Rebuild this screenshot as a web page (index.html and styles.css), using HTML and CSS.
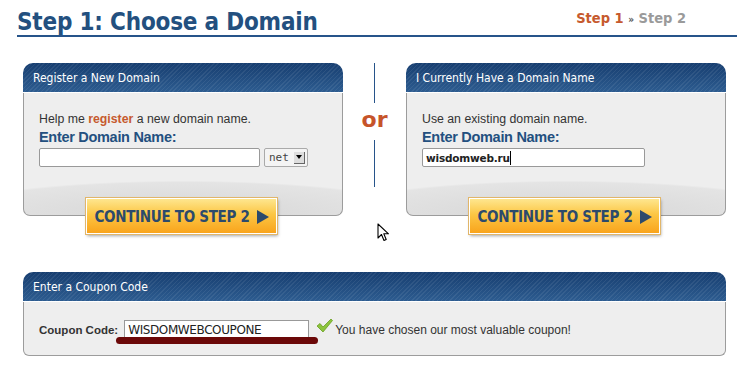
FILE: index.html
```html
<html>
    <head>
        <title>Choose a Domain</title>
        <link rel="stylesheet" href="styles.css">
    </head>
    <body>
        <div class="page">
            <div class="titleRow">
                <h1 class="pageTitle">Step 1: Choose a Domain</h1>
                <div class="steps">
                    <span class="stepActive">Step 1</span>
                    <span class="stepArrow">&raquo;</span>
                    <span class="stepNext">Step 2</span>
                </div>
            </div>

            <div class="choiceRow">
                <div class="panelWrap">
                    <div class="panel">
                        <div class="panelHead">Register a New Domain</div>
                        <div class="panelBody">
                            <p class="hint">Help me <b class="accent">register</b> a new domain name.</p>
                            <div class="fieldLabel">Enter Domain Name:</div>
                            <div class="fieldRow">
                                <div class="textBox"></div>
                                <div class="selectBox">
                                    <span>net</span>
                                    <span class="selectArrow"></span>
                                </div>
                            </div>
                        </div>
                    </div>
                    <div class="buttonRow">
                        <div class="continueBtn">CONTINUE TO STEP 2 <span class="btnArrow"></span></div>
                    </div>
                </div>

                <div class="divider">
                    <div class="dividerLine"></div>
                    <div class="orText">or</div>
                    <div class="dividerLine lower"></div>
                </div>

                <div class="panelWrap">
                    <div class="panel">
                        <div class="panelHead">I Currently Have a Domain Name</div>
                        <div class="panelBody">
                            <p class="hint">Use an existing domain name.</p>
                            <div class="fieldLabel">Enter Domain Name:</div>
                            <div class="fieldRow">
                                <div class="textBox wide"><span class="typed">wisdomweb.ru</span><span class="caret"></span></div>
                            </div>
                        </div>
                    </div>
                    <div class="buttonRow">
                        <div class="continueBtn">CONTINUE TO STEP 2 <span class="btnArrow"></span></div>
                    </div>
                </div>
            </div>

            <div class="cursorRow">
                <svg class="cursor" width="14" height="20" viewBox="0 0 14 20">
                    <path d="M1 1 L1 15 L4.5 11.5 L7 17.5 L9.2 16.5 L6.8 10.8 L11.5 10.8 Z" fill="#fff" stroke="#000" stroke-width="1.1" stroke-linejoin="round"/>
                </svg>
            </div>

            <div class="panel coupon">
                <div class="panelHead">Enter a Coupon Code</div>
                <div class="couponBody">
                    <span class="couponLabel">Coupon Code:</span>
                    <div class="couponField">
                        <div class="textBox couponBox">WISDOMWEBCOUPONE</div>
                        <div class="marker"></div>
                    </div>
                    <svg class="check" width="17" height="15" viewBox="0 0 17 15">
                        <path d="M1 8 L4 5.5 L7 9 L15 1 L16.5 2.5 L7 14 Z" fill="#8cc43c" stroke="#6a9e22" stroke-width="0.8" stroke-linejoin="round"/>
                    </svg>
                    <span class="couponMsg">You have chosen our most valuable coupon!</span>
                </div>
            </div>
        </div>
    </body>
</html>
```

FILE: styles.css
```css
body
{
    margin: 0;
    padding: 0;
    background-color: #fff;
    font-family: "Liberation Sans", Arial, sans-serif;
}
.page
{
    padding: 6px 9px 0 17px;
}
.titleRow
{
    display: flex;
    justify-content: space-between;
    align-items: flex-end;
    border-bottom: 2px solid #26548a;
    height: 29px;
    width: 720px;
}
.pageTitle
{
    margin: 0 0 -1px 0;
    font-family: "DejaVu Sans Condensed", "DejaVu Sans", sans-serif;
    font-size: 24px;
    font-weight: bold;
    color: #23507f;
    line-height: 28px;
    letter-spacing: -0.2px;
}
.steps
{
    font-family: "DejaVu Sans Condensed", "DejaVu Sans", sans-serif;
    font-weight: bold;
    font-size: 14.5px;
    line-height: 18px;
    margin-right: 51px;
    margin-bottom: 6px;
}
.stepActive
{
    color: #c65a2e;
}
.stepArrow
{
    color: #555;
    font-size: 10px;
}
.stepNext
{
    color: #9a9a9a;
}
.choiceRow
{
    display: flex;
    margin-top: 26px;
    margin-left: 6px;
}
.panelWrap
{
    width: 320px;
}
.panel
{
    width: 320px;
}
.panelHead
{
    height: 29px;
    line-height: 30px;
    padding-left: 10px;
    border-radius: 10px 10px 0 0;
    color: #fff;
    font-family: "DejaVu Sans Condensed", "DejaVu Sans", sans-serif;
    font-size: 12px;
    background:
        repeating-linear-gradient(-45deg, rgba(255,255,255,0.07) 0 1px, transparent 1px 3px),
        linear-gradient(#173e70, #2d5c90);
    border-bottom: 1px solid #fff;
}
.panelBody
{
    height: 103px;
    padding: 19px 15px 0 15px;
    border: 1px solid #9c9c9c;
    border-top: none;
    border-radius: 0 0 7px 7px;
    background:
        radial-gradient(ellipse 245px 34px at 50% 100%, #d6d6d6 0, #e4e4e4 96%, #ececec 100%, transparent 101%) bottom / 100% 34px no-repeat,
        #eeeeee;
}
.hint
{
    margin: 0;
    font-size: 12.3px;
    color: #333;
    line-height: 14px;
}
.accent
{
    color: #c65a2e;
}
.fieldLabel
{
    margin-top: 2px;
    font-size: 14.5px;
    font-weight: bold;
    color: #23507f;
    line-height: 18px;
    letter-spacing: -0.3px;
}
.fieldRow
{
    display: flex;
    gap: 4px;
    margin-top: 2px;
}
.textBox
{
    width: 219px;
    height: 17px;
    background-color: #fff;
    border: 1px solid #999;
    border-radius: 2px;
}
.textBox.wide
{
    display: flex;
    align-items: center;
    padding-left: 3px;
    box-sizing: content-box;
    width: 218px;
}
.typed
{
    font-family: "DejaVu Sans", sans-serif;
    font-weight: bold;
    font-size: 10.5px;
    letter-spacing: -0.2px;
    color: #222;
}
.caret
{
    width: 1px;
    height: 14px;
    background-color: #000;
}
.selectBox
{
    height: 17px;
    background-color: #f4f4f4;
    border: 1px solid #aaa;
    border-radius: 2px;
    display: flex;
    align-items: center;
    justify-content: space-between;
    padding-left: 4px;
    box-sizing: content-box;
    width: 38px;
    font-family: "DejaVu Sans Mono", monospace;
    font-size: 11px;
    color: #444;
}
.selectArrow
{
    width: 10px;
    height: 11px;
    margin-right: 2px;
    background-color: #ddd;
    border-right: 1px solid #666;
    border-bottom: 1px solid #666;
    position: relative;
}
.selectArrow::after
{
    content: "";
    position: absolute;
    left: 2px;
    top: 3px;
    border-left: 3px solid transparent;
    border-right: 3px solid transparent;
    border-top: 4px solid #000;
}
.buttonRow
{
    display: flex;
    justify-content: center;
    margin-top: -18px;
    padding-right: 3px;
}
.continueBtn
{
    width: 191px;
    height: 36px;
    box-sizing: border-box;
    display: flex;
    align-items: center;
    justify-content: center;
    gap: 7px;
    border: 1px solid #fff;
    outline: 1px solid #e1b66a;
    box-shadow: 1px 2px 3px rgba(0,0,0,0.35);
    background: linear-gradient(#fee68e 0, #fcc644 45%, #f9a41c 100%);
    color: #2c4a6c;
    font-family: "DejaVu Sans Condensed", "DejaVu Sans", sans-serif;
    font-weight: bold;
    font-size: 15px;
    letter-spacing: -0.3px;
    padding-top: 1px;
}
.btnArrow
{
    width: 0;
    height: 0;
    border-top: 7px solid transparent;
    border-bottom: 7px solid transparent;
    border-left: 12px solid #2c4a6c;
}
.divider
{
    width: 63px;
    display: flex;
    flex-direction: column;
    align-items: center;
}
.dividerLine
{
    width: 1px;
    height: 40px;
    background-color: #27548a;
}
.dividerLine.lower
{
    height: 47px;
}
.orText
{
    font-family: "DejaVu Sans", sans-serif;
    font-weight: bold;
    font-size: 22px;
    color: #c6542a;
    height: 37px;
    line-height: 33px;
}
.cursorRow
{
    height: 38px;
    position: relative;
}
.cursor
{
    position: absolute;
    left: 360px;
    top: -11px;
}
.coupon
{
    width: 703px;
    margin-left: 6px;
}
.couponBody
{
    height: 54px;
    border: 1px solid #9c9c9c;
    border-top: none;
    border-radius: 0 0 6px 6px;
    background-color: #eee;
    display: flex;
    align-items: center;
    padding-left: 15px;
    padding-top: 2px;
    box-sizing: border-box;
}
.couponLabel
{
    font-size: 11.5px;
    font-weight: bold;
    color: #333;
    margin-right: 6px;
}
.couponField
{
    position: relative;
}
.couponBox
{
    width: 180px;
    height: 17px;
    font-family: "DejaVu Sans", sans-serif;
    font-size: 12px;
    color: #222;
    line-height: 18px;
    padding-left: 3px;
    border-radius: 0;
    letter-spacing: -0.4px;
}
.marker
{
    position: absolute;
    left: -8px;
    top: 17px;
    width: 202px;
    height: 7px;
    border-radius: 4px;
    background-color: #6b0808;
}
.check
{
    margin-left: 7px;
    margin-right: 2px;
    margin-top: -8px;
}
.couponMsg
{
    font-size: 12px;
    color: #333;
}
```
